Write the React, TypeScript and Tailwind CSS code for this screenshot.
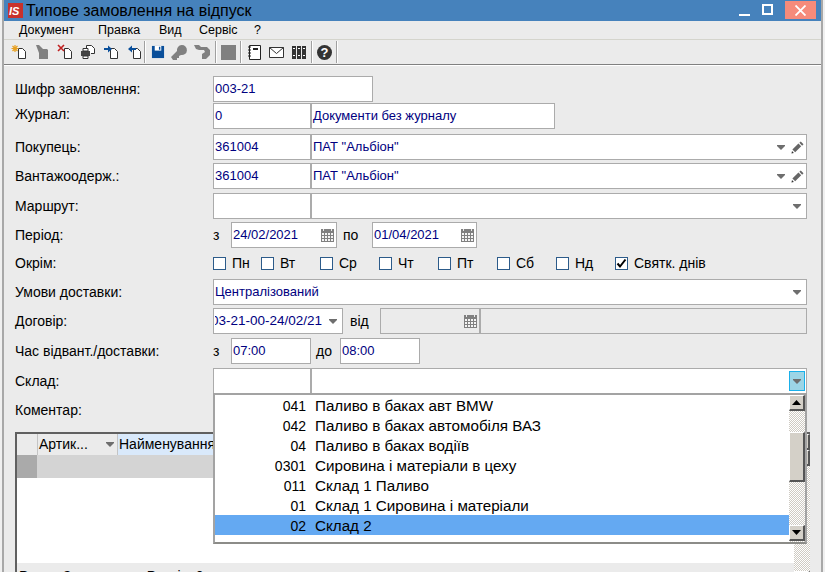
import type { ReactNode } from "react";

const days = [
  { name: "Пн", width: "w-[48px]", checked: false },
  { name: "Вт", width: "w-[59px]", checked: false },
  { name: "Ср", width: "w-[59px]", checked: false },
  { name: "Чт", width: "w-[59px]", checked: false },
  { name: "Пт", width: "w-[59px]", checked: false },
  { name: "Сб", width: "w-[59px]", checked: false },
  { name: "Нд", width: "w-[59px]", checked: false },
  { name: "Святк. днів", width: "w-[100px]", checked: true },
];

const stores = [
  ["041", "Паливо в баках авт BMW"],
  ["042", "Паливо в баках автомобіля ВАЗ"],
  ["04", "Паливо в баках водіїв"],
  ["0301", "Сировина і матеріали в цеху"],
  ["011", "Склад 1 Паливо"],
  ["01", "Склад 1 Сировина і матеріали"],
  ["02", "Склад 2"],
];

const checker = "bg-[repeating-conic-gradient(#cfcbc3_0_25%,#ffffff_0_50%)] bg-[length:2px_2px]";
const raised =
  "border-t border-l border-t-white border-l-white border-r-2 border-b-2 border-r-[#555] border-b-[#555] bg-[#d4d0c8]";

function Arrow() {
  return (
    <svg width="8" height="5" viewBox="0 0 8 5">
      <path d="M0 0h8v1L4 5 0 1z" fill="#6e6e6e" />
    </svg>
  );
}

function Pencil() {
  return (
    <svg width="13" height="13" viewBox="0 0 14 14">
      <path d="M10.5 .5l3 3-1.5 1.5-3-3zM8 2.7l3 3-6.5 6.5-3-3z" fill="#666" />
      <path d="M.5 13.5l.6-2.6 2 2z" fill="#333" />
    </svg>
  );
}

function Calendar() {
  return (
    <svg width="13" height="13" viewBox="0 0 13 13">
      <rect width="13" height="13" fill="#808080" />
      <path d="M2 0h1v2H2zM10 0h1v2h-1z" fill="#ebebeb" />
      <path d="M1 4h2v2H1zM4 4h2v2H4zM7 4h2v2H7zM10 4h2v2h-2zM1 7h2v2H1zM4 7h2v2H4zM7 7h2v2H7zM10 7h2v2h-2zM1 10h2v2H1zM4 10h2v2H4zM7 10h2v2H7zM10 10h2v2h-2z" fill="#f4f4f4" />
    </svg>
  );
}

function Box({
  width,
  children,
  className = "",
}: {
  width: string;
  children?: ReactNode;
  className?: string;
}) {
  return (
    <div
      className={`flex h-full items-center overflow-hidden border border-[#ababab] bg-white pl-[1px] text-[13px] text-[#000080] ${width} ${className}`}
    >
      {children}
    </div>
  );
}

function DateBox({ width, value }: { width: string; value: string }) {
  return (
    <Box width={width} className="justify-between pr-[2px]">
      {value}
      <Calendar />
    </Box>
  );
}

function Row({
  label,
  top,
  labelClass = "",
  children,
}: {
  label: string;
  top: string;
  labelClass?: string;
  children?: ReactNode;
}) {
  return (
    <div className={`flex h-[26px] items-center ${top}`}>
      <div className={`w-[198px] shrink-0 ${labelClass}`}>{label}</div>
      {children}
    </div>
  );
}

function Doc({ children }: { children?: ReactNode }) {
  return (
    <svg width="16" height="16" viewBox="0 0 16 16">
      <path d="M7.500 4.500h4l3 3v7h-7z" fill="#fff" stroke="#333" />
      {children}
    </svg>
  );
}

function Sep() {
  return <div className="h-[22px] w-[2px] shrink-0 border-r border-r-white bg-[#a0a0a0]" />;
}

function Toolbar() {
  return (
    <div className="flex h-[25px] shrink-0 items-center border-b border-b-[#808080] pl-[7px] shadow-[0_1px_0_#ffffff]">
      <div className="flex w-[133px] items-center gap-[7px]">
        <Doc>
          <path d="M4 1v7M.5 4.500h7M1.500 2l5 5M6.500 2l-5 5" stroke="#e8a020" strokeWidth="1.200" />
        </Doc>
        <svg width="16" height="16" viewBox="0 0 16 16">
          <path d="M2 1h3l4 4h4l1 1v9H5V9z" fill="#808080" />
        </svg>
        <Doc>
          <path d="M1 1l6 6M7 1L1 7" stroke="#c02020" strokeWidth="1.600" />
        </Doc>
        <svg width="16" height="16" viewBox="0 0 16 16">
          <path d="M6.500 4.500V1.500h5l3 3v5H11" fill="#fff" stroke="#333" />
          <path d="M1 7h9v5H1z" fill="#444" />
          <path d="M3 4.500h5V7H3zM3 12h5v2.500H3z" fill="#fff" stroke="#333" />
        </svg>
        <Doc>
          <path d="M1 4h4V1.500L9 5 5 8.500V6H1z" fill="#0a4f9a" />
        </Doc>
        <Doc>
          <path d="M10 4H6V1.500L2 5l4 3.500V6h4z" fill="#0a4f9a" />
        </Doc>
      </div>
      <Sep />
      <div className="flex w-[69px] items-center gap-[5px] pl-[5px]">
        <svg width="14" height="14" viewBox="0 0 15 15">
          <path d="M1 1h13v13H1z" fill="#0a4f9a" />
          <path d="M4 1h7v5H4z" fill="#fff" />
          <path d="M8.500 2H10v3H8.500zM4 9h7v5H4z" fill="#0a4f9a" />
        </svg>
        <svg width="18" height="16" viewBox="0 0 18 16">
          <path d="M1 13l6-6a5 5 0 1 1 4 4l-2 1v2H7v2H3z" fill="#808080" />
        </svg>
        <svg width="18" height="16" viewBox="0 0 18 16">
          <path d="M1 1h5l2 2h6l3 3v5l-4 4H9v-5l3-2-1-2H6L3 5z" fill="#808080" />
        </svg>
      </div>
      <Sep />
      <div className="flex w-[23px] justify-center">
        <div className="size-[15px] bg-[#808080]" />
      </div>
      <Sep />
      <div className="flex w-[69px] items-center justify-between pr-[5px] pl-[6px]">
        <svg width="13" height="15" viewBox="0 0 13 15">
          <path d="M1.500.5h11v14h-11z" fill="#fff" stroke="#222" />
          <path d="M0 2h3M0 5h3M0 8h3M0 11h3" stroke="#222" />
          <path d="M5 3h5v2H5z" fill="#222" />
        </svg>
        <svg width="15" height="11" viewBox="0 0 15 11">
          <path d="M.5.500h14v10H.5z" fill="#fff" stroke="#333" />
          <path d="M.5.500l7 6 7-6" fill="none" stroke="#333" />
        </svg>
        <svg width="14" height="14" viewBox="0 0 14 14">
          <path d="M0 1h4v13H0zM5 1h4v13H5zM10 1h4v13h-4z" fill="#333" />
          <path d="M1 3h2v1H1zM6 3h2v1H6zM11 3h2v1h-2zM1 10h2v1H1zM6 10h2v1H6zM11 10h2v1h-2z" fill="#fff" />
        </svg>
      </div>
      <Sep />
      <div className="flex w-[23px] justify-center">
        <div className="flex size-[15px] items-center justify-center rounded-full bg-[#333] text-[13px] leading-none font-bold text-white">
          ?
        </div>
      </div>
      <Sep />
    </div>
  );
}

function ScrollButton({ up }: { up?: boolean }) {
  return (
    <div className={`flex h-[16px] w-[16px] shrink-0 items-center justify-center ${raised}`}>
      <svg width="9" height="5" viewBox="0 0 9 5">
        <path d={up ? "M4.500 0L9 5H0z" : "M0 0h9L4.500 5z"} fill="#000" />
      </svg>
    </div>
  );
}

function StorePopup() {
  return (
    <div className="absolute top-[393px] left-[213px] z-10 flex h-[151px] w-[594px] border-2 border-[#a3a3a3] border-b-[#8c8c88] bg-white">
      <div className="flex-1">
        {stores.map(([code, name], i) => (
          <div key={code} className={`flex h-[20px] items-center pt-[2px] ${i === 6 ? "bg-[#64a9f2]" : ""}`}>
            <div className="w-[91px] shrink-0 text-right">{code}</div>
            <div className="pl-[9px] text-[15.2px] whitespace-nowrap">{name}</div>
          </div>
        ))}
      </div>
      <div className={`flex w-[16px] flex-col ${checker}`}>
        <ScrollButton up />
        <div className={`mt-[21px] h-[50px] w-[16px] ${raised}`} />
        <div className="mt-auto mb-[1px]">
          <ScrollButton />
        </div>
      </div>
    </div>
  );
}

function Grid() {
  return (
    <div className="mt-[9px] -mr-[3px] flex h-[150px] shrink-0 border-t-2 border-l-2 border-t-[#606060] border-l-[#606060] bg-white">
      <div className="flex min-w-0 flex-1 flex-col">
        <div className="flex h-[21px] shrink-0">
          <div className="w-[20px] bg-[#ebebeb]" />
          <div className="flex w-[81px] items-center justify-between border-x border-[#c4c4c4] bg-[#ebebeb] pr-[3px] pl-[1px]">
            Артик...
            <Arrow />
          </div>
          <div className="flex-1 bg-[#d9e9fb] pl-[1px] whitespace-nowrap">Найменування</div>
        </div>
        <div className="flex h-[23px] shrink-0 bg-[#d4d4d4]">
          <div className="w-[20px] bg-[#aaaaaa]" />
        </div>
        <div className="h-[85px] shrink-0" />
        <div className="flex-1 bg-[#ebebeb] pt-[3px] pl-[2px] whitespace-nowrap">
          Разом Замовлення Рядків: 0
        </div>
      </div>
      <div className={`flex w-[16px] shrink-0 flex-col ${checker}`}>
        <ScrollButton up />
        <ScrollButton />
        <div className="mt-[105px]">
          <ScrollButton />
        </div>
      </div>
    </div>
  );
}

export default function App() {
  return (
    <div className="relative flex h-[572px] w-[825px] overflow-hidden bg-[#f0f0f0] pr-[2px] pl-[2px] font-['Liberation_Sans',sans-serif] text-[14px] text-black">
      <div className="flex min-w-0 flex-1 flex-col border-x-2 border-[#a8a8a8] bg-[#ebebeb]">
        <div className="flex h-[21px] shrink-0 items-center bg-[#4682bc] pl-[4px]">
          <svg width="15" height="15" viewBox="0 0 15 15" className="mr-[3px]">
            <rect width="15" height="15" fill="#c8312b" />
            <text x="1" y="12" fontSize="11" fontWeight="bold" fontStyle="italic" fill="#fff">
              IS
            </text>
          </svg>
          <span className="text-[16px] text-black">Типове замовлення на відпуск</span>
          <div className="ml-auto flex h-full items-start">
            <div className="mt-[14px] h-[2px] w-[11px] bg-white" />
            <div className="mt-[4px] ml-[12px] size-[11px] border-2 border-white" />
            <div className="mt-[1px] ml-[12px] flex h-[18px] w-[31px] items-center justify-center bg-[#f68b7b]">
              <svg width="11" height="11" viewBox="0 0 11 11">
                <path d="M.5.500l10 10M10.500.500l-10 10" stroke="#fff" strokeWidth="1.800" />
              </svg>
            </div>
            <div className="w-[5px]" />
          </div>
        </div>

        <div className="flex h-[19px] shrink-0 items-center border-b border-b-[#d4d4cc] pl-[15px] text-[12.5px]">
          <span className="w-[79px]">Документ</span>
          <span className="w-[61px]">Правка</span>
          <span className="w-[40px]">Вид</span>
          <span className="w-[55px]">Сервіс</span>
          <span>?</span>
        </div>

        <Toolbar />

        <div className="flex flex-col pr-[14px] pl-[11px]">
          <Row label="Шифр замовлення:" top="mt-[11px]">
            <Box width="w-[160px]">003-21</Box>
          </Row>
          <Row label="Журнал:" top="mt-[1px]" labelClass="-mt-[4px]">
            <Box width="w-[98px]">0</Box>
            <Box width="w-[244px]" className="text-[12.5px]">
              Документи без журналу
            </Box>
          </Row>
          <Row label="Покупець:" top="mt-[5px]">
            <Box width="w-[98px]">361004</Box>
            <Box width="flex-1" className="justify-between pr-[2px]">
              ПАТ "Альбіон"
              <span className="flex items-center gap-[6px]">
                <Arrow />
                <Pencil />
              </span>
            </Box>
          </Row>
          <Row label="Вантажоодерж.:" top="mt-[3px]">
            <Box width="w-[98px]">361004</Box>
            <Box width="flex-1" className="justify-between pr-[2px]">
              ПАТ "Альбіон"
              <span className="flex items-center gap-[6px]">
                <Arrow />
                <Pencil />
              </span>
            </Box>
          </Row>
          <Row label="Маршрут:" top="mt-[4px]">
            <Box width="w-[98px]" />
            <Box width="flex-1" className="justify-end pr-[5px]">
              <Arrow />
            </Box>
          </Row>
          <Row label="Період:" top="mt-[3px]">
            <span className="w-[18px]">з</span>
            <DateBox width="w-[106px]" value="24/02/2021" />
            <span className="w-[35px] pl-[6px]">по</span>
            <DateBox width="w-[105px]" value="01/04/2021" />
          </Row>
          <Row label="Окрім:" top="mt-[2px]">
            {days.map((day) => (
              <div key={day.name} className={`flex shrink-0 items-center gap-[6px] ${day.width}`}>
                <span className="flex size-[13px] items-center justify-center border border-[#2c5b8a] bg-white">
                  {day.checked && (
                    <svg width="11" height="11" viewBox="0 0 11 11">
                      <path d="M1.500 5.500l2.500 3L9.500 1.500" fill="none" stroke="#000" strokeWidth="2" />
                    </svg>
                  )}
                </span>
                <span className="whitespace-nowrap">{day.name}</span>
              </div>
            ))}
          </Row>
          <Row label="Умови доставки:" top="mt-[3px]">
            <Box width="flex-1" className="justify-between pr-[5px] text-[12.5px]">
              Централізований
              <Arrow />
            </Box>
          </Row>
          <Row label="Договір:" top="mt-[3px]">
            <Box width="w-[130px]" className="justify-between pr-[5px] pl-0">
              <span className="flex w-[107px] justify-end overflow-hidden text-[13.5px] whitespace-nowrap">
                03-21-00-24/02/21
              </span>
              <Arrow />
            </Box>
            <span className="w-[37px] pl-[7px]">від</span>
            <div className="flex h-full w-[100px] items-center justify-end border border-[#ababab] pr-[2px]">
              <Calendar />
            </div>
            <div className="h-full flex-1 border border-[#ababab]" />
          </Row>
          <Row label="Час відвант./доставки:" top="mt-[4px]">
            <span className="w-[18px]">з</span>
            <Box width="w-[80px]">07:00</Box>
            <span className="w-[29px] pl-[5px]">до</span>
            <Box width="w-[80px]">08:00</Box>
          </Row>
          <Row label="Склад:" top="mt-[4px]">
            <Box width="w-[98px]" />
            <Box width="flex-1" className="justify-end pr-[1px]">
              <div className="flex h-[20px] w-[16px] items-center justify-center border border-[#1ab0ea] bg-[#9cd5e6]">
                <Arrow />
              </div>
            </Box>
          </Row>
          <Row label="Коментар:" top="mt-[3px]" />
          <Grid />
        </div>
      </div>
      <StorePopup />
    </div>
  );
}
